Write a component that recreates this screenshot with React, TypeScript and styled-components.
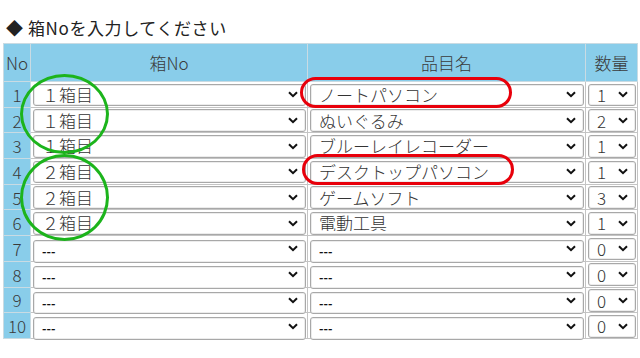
import { createGlobalStyle, styled } from 'styled-components';

const GlobalStyle = createGlobalStyle`
  html, body {
    margin: 0;
    padding: 0;
    background: #ffffff;
  }
  body {
    font-family: "Noto Sans CJK JP", "Noto Sans", sans-serif;
    color: #333333;
  }
`;

const Page = styled.div`
  width: 640px;
  height: 358px;
  padding: 16px 0 0 3px;
  box-sizing: border-box;
  overflow: hidden;
`;

const Title = styled.h2`
  margin: 0 0 3px 3px;
  height: 24px;
  font-size: 17px;
  line-height: 24px;
  letter-spacing: 0.6px;
  font-weight: 400;
  color: #222222;
`;

const TableWrap = styled.div`
  position: relative;
  width: 630px;
`;

const Table = styled.table`
  width: 630px;
  border-collapse: collapse;
  table-layout: fixed;
`;

const Th = styled.th<{ w: number }>`
  width: ${({ w }) => w}px;
  height: 37px;
  padding: 0;
  background: #89cdea;
  border: 1px solid #c9dbe3;
  font-size: 17px;
  font-weight: 300;
  color: #3a3a3a;
  text-align: center;
`;

const NoCell = styled.td`
  padding: 0;
  background: #89cdea;
  border: 1px solid #c9dbe3;
  font-size: 17px;
  font-weight: 300;
  color: #3a3a3a;
  text-align: center;
  line-height: 1;
`;

const Cell = styled.td`
  padding: 1px 1px 1px 2px;
  background: #ffffff;
  border: 1px solid #c4c4c4;
`;

const SelectBox = styled.div`
  position: relative;
  height: 22.7px;
`;

const Select = styled.select<{ empty: boolean }>`
  appearance: none;
  -webkit-appearance: none;
  width: 100%;
  height: 100%;
  margin: 0;
  padding: 0 0 1px 8px;
  box-sizing: border-box;
  border: 1px solid #a8a8a8;
  border-radius: 3px;
  box-shadow: inset 0 0 0 1px #ececec;
  background: #ffffff;
  font-family: "Noto Sans CJK JP", "Noto Sans", sans-serif;
  font-size: ${({ empty }) => (empty ? '12px' : '17px')};
  font-weight: ${({ empty }) => (empty ? 700 : 300)};
  color: ${({ empty }) => (empty ? '#111111' : '#333333')};
  line-height: 1;
  outline: none;
`;

const Chevron = styled.svg`
  position: absolute;
  right: 8px;
  top: 50%;
  margin-top: -3px;
  width: 10px;
  height: 7px;
  pointer-events: none;
`;

const GreenRing = styled.div`
  position: absolute;
  left: 17px;
  width: 89px;
  border: 3px solid #1cb41c;
  border-radius: 50%;
  box-sizing: border-box;
  pointer-events: none;
`;

const RedFrame = styled.div`
  position: absolute;
  width: 212px;
  height: 31px;
  border: 3px solid #e8000b;
  border-radius: 16px;
  box-sizing: border-box;
  pointer-events: none;
`;

interface Row {
  no: number;
  box: string;
  item: string;
  qty: string;
}

const rows: Row[] = [
  { no: 1, box: '１箱目', item: 'ノートパソコン', qty: '1' },
  { no: 2, box: '１箱目', item: 'ぬいぐるみ', qty: '2' },
  { no: 3, box: '１箱目', item: 'ブルーレイレコーダー', qty: '1' },
  { no: 4, box: '２箱目', item: 'デスクトップパソコン', qty: '1' },
  { no: 5, box: '２箱目', item: 'ゲームソフト', qty: '3' },
  { no: 6, box: '２箱目', item: '電動工具', qty: '1' },
  { no: 7, box: '---', item: '---', qty: '0' },
  { no: 8, box: '---', item: '---', qty: '0' },
  { no: 9, box: '---', item: '---', qty: '0' },
  { no: 10, box: '---', item: '---', qty: '0' },
];

const Dropdown = ({ value }: { value: string }) => (
  <SelectBox>
    <Select empty={value === '---'} value={value} onChange={() => {}}>
      <option value={value}>{value}</option>
    </Select>
    <Chevron viewBox="0 0 10 7">
      <path d="M1 1.2 L5 5.2 L9 1.2" fill="none" stroke="#111" strokeWidth="2" />
    </Chevron>
  </SelectBox>
);

const App = () => {
  return (
    <Page>
      <GlobalStyle />
      <Title>◆ 箱Noを入力してください</Title>
      <TableWrap>
        <Table>
          <thead>
            <tr>
              <Th w={26}>No</Th>
              <Th w={276}>箱No</Th>
              <Th w={277}>品目名</Th>
              <Th w={51}>数量</Th>
            </tr>
          </thead>
          <tbody>
            {rows.map((r) => (
              <tr key={r.no}>
                <NoCell>{r.no}</NoCell>
                <Cell>
                  <Dropdown value={r.box} />
                </Cell>
                <Cell>
                  <Dropdown value={r.item} />
                </Cell>
                <Cell>
                  <Dropdown value={r.qty} />
                </Cell>
              </tr>
            ))}
          </tbody>
        </Table>
        <GreenRing style={{ top: 31, height: 80 }} />
        <GreenRing style={{ top: 111, height: 87 }} />
        <RedFrame style={{ left: 297, top: 34 }} />
        <RedFrame style={{ left: 299, top: 111 }} />
      </TableWrap>
    </Page>
  );
};

export default App;
